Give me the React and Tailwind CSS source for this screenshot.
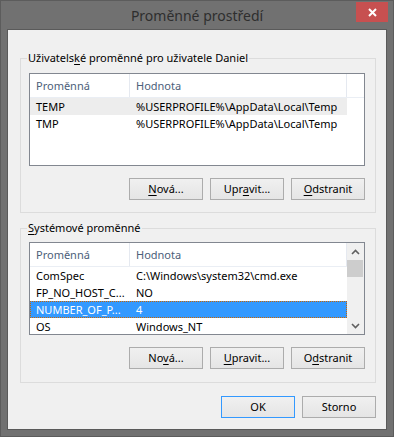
import React from "react";

const Btn = ({ children, def }) => (
  <div
    className={
      def
        ? "w-[74px] h-[22px] border border-[#3399ff] bg-linear-to-b from-[#f0f0f0] to-[#e5e5e5] flex items-center justify-center text-black"
        : "w-[74px] h-[22px] border border-[#acacac] bg-linear-to-b from-[#f0f0f0] to-[#e5e5e5] flex items-center justify-center text-black"
    }
  >
    <span className="leading-[16px]">{children}</span>
  </div>
);

const U = ({ children }) => <span className="underline underline-offset-[2px]">{children}</span>;

const Header = ({ filler }) => (
  <div className="h-[24px] flex border-b border-[#eaeef4] text-[#4c607a] shrink-0">
    <div className="w-[100px] border-r border-[#e5e9f0] pl-[6px] flex items-center">Proměnná</div>
    <div className="w-[217px] border-r border-[#e5e9f0] pl-[6px] flex items-center">Hodnota</div>
    {filler ? <div className="flex-1" /> : null}
  </div>
);

const Row = ({ a, b, sel, gray }) => (
  <div
    className={
      sel
        ? "w-[317px] h-[17px] flex items-center shrink-0 bg-[#3399ff] text-white outline-1 outline-dotted outline-[#cc6600] -outline-offset-1"
        : gray
        ? "w-[317px] h-[17px] flex items-center shrink-0 bg-[#ededed] text-black"
        : "w-[317px] h-[17px] flex items-center shrink-0 text-black"
    }
  >
    <div className="w-[100px] pl-[6px] pr-[2px] whitespace-nowrap overflow-hidden leading-[16px]">{a}</div>
    <div className="w-[217px] pl-[6px] whitespace-nowrap overflow-hidden leading-[16px]">{b}</div>
  </div>
);

const Group = ({ label, children, pt }) => (
  <div className={pt === 14 ? "relative border border-[#dcdcdc] pt-[14px] pl-[8px] pr-[10px] pb-[12px]" : "relative border border-[#dcdcdc] pt-[13px] pl-[8px] pr-[10px] pb-[13px]"}>
    <div className="absolute -top-[9px] left-[6px] bg-[#f0f0f0] px-[1px] leading-[16px] text-black">{label}</div>
    {children}
  </div>
);

const Chevron = ({ down }) => (
  <svg width="9" height="6" viewBox="0 0 9 6">
    {down ? (
      <polyline points="1,1 4.5,4.5 8,1" fill="none" stroke="#606060" strokeWidth="1.6" />
    ) : (
      <polyline points="1,5 4.5,1.5 8,5" fill="none" stroke="#606060" strokeWidth="1.6" />
    )}
  </svg>
);

export default function App() {
  return (
    <div className="w-[394px] h-[437px] bg-[#717171] border border-[#5c5c5c] flex flex-col font-['Noto_Sans',sans-serif] text-[11px] leading-[16px]">
      <div className="relative h-[28px] flex items-center justify-center shrink-0">
        <span className="text-[14px] leading-[18px] text-[#2e2e2e] pt-[2px]">Proměnné prostředí</span>
        <div className="absolute top-[1px] right-[5px] w-[32px] h-[20px] bg-[#c75050] flex items-center justify-center">
          <svg width="9" height="9" viewBox="0 0 9 9">
            <path d="M1 1 L8 8 M8 1 L1 8" stroke="white" strokeWidth="2" />
          </svg>
        </div>
      </div>
      <div className="mx-[6px] h-[401px] border border-[#5a5a5a] bg-[#f0f0f0] pt-[28px] pl-[12px] pr-[10px] flex flex-col">
        <Group pt={14} label={<>Uživatels<U>k</U>é proměnné pro uživatele Daniel</>}>
          <div className="h-[93px] border border-[#828790] bg-white flex flex-col overflow-hidden">
            <Header filler />
            <Row a="TEMP" b="%USERPROFILE%\AppData\Local\Temp" gray />
            <Row a="TMP" b="%USERPROFILE%\AppData\Local\Temp" />
          </div>
          <div className="mt-[12px] flex justify-end gap-[7px]">
            <Btn><U>N</U>ová...</Btn>
            <Btn>Upr<U>a</U>vit...</Btn>
            <Btn><U>O</U>dstranit</Btn>
          </div>
        </Group>
        <div className="mt-[15px]">
          <Group pt={13} label={<><U>S</U>ystémové proměnné</>}>
            <div className="h-[93px] border border-[#828790] bg-white flex overflow-hidden">
              <div className="w-[317px] flex flex-col">
                <Header />
                <Row a="ComSpec" b="C:\Windows\system32\cmd.exe" />
                <Row a="FP_NO_HOST_C..." b="NO" />
                <Row a="NUMBER_OF_P..." b="4" sel />
                <Row a="OS" b="Windows_NT" />
              </div>
              <div className="w-[17px] bg-[#f0f0f0] flex flex-col shrink-0">
                <div className="h-[17px] flex items-center justify-center">
                  <Chevron />
                </div>
                <div className="h-[17px] w-[16px] bg-[#cdcdcd]" />
                <div className="flex-1" />
                <div className="h-[17px] flex items-center justify-center">
                  <Chevron down />
                </div>
              </div>
            </div>
            <div className="mt-[12px] flex justify-end gap-[7px]">
              <Btn>No<U>v</U>á...</Btn>
              <Btn><U>U</U>pravit...</Btn>
              <Btn>O<U>d</U>stranit</Btn>
            </div>
          </Group>
        </div>
        <div className="mt-[13px] flex justify-end gap-[7px]">
          <Btn def>OK</Btn>
          <Btn>Storno</Btn>
        </div>
      </div>
    </div>
  );
}
